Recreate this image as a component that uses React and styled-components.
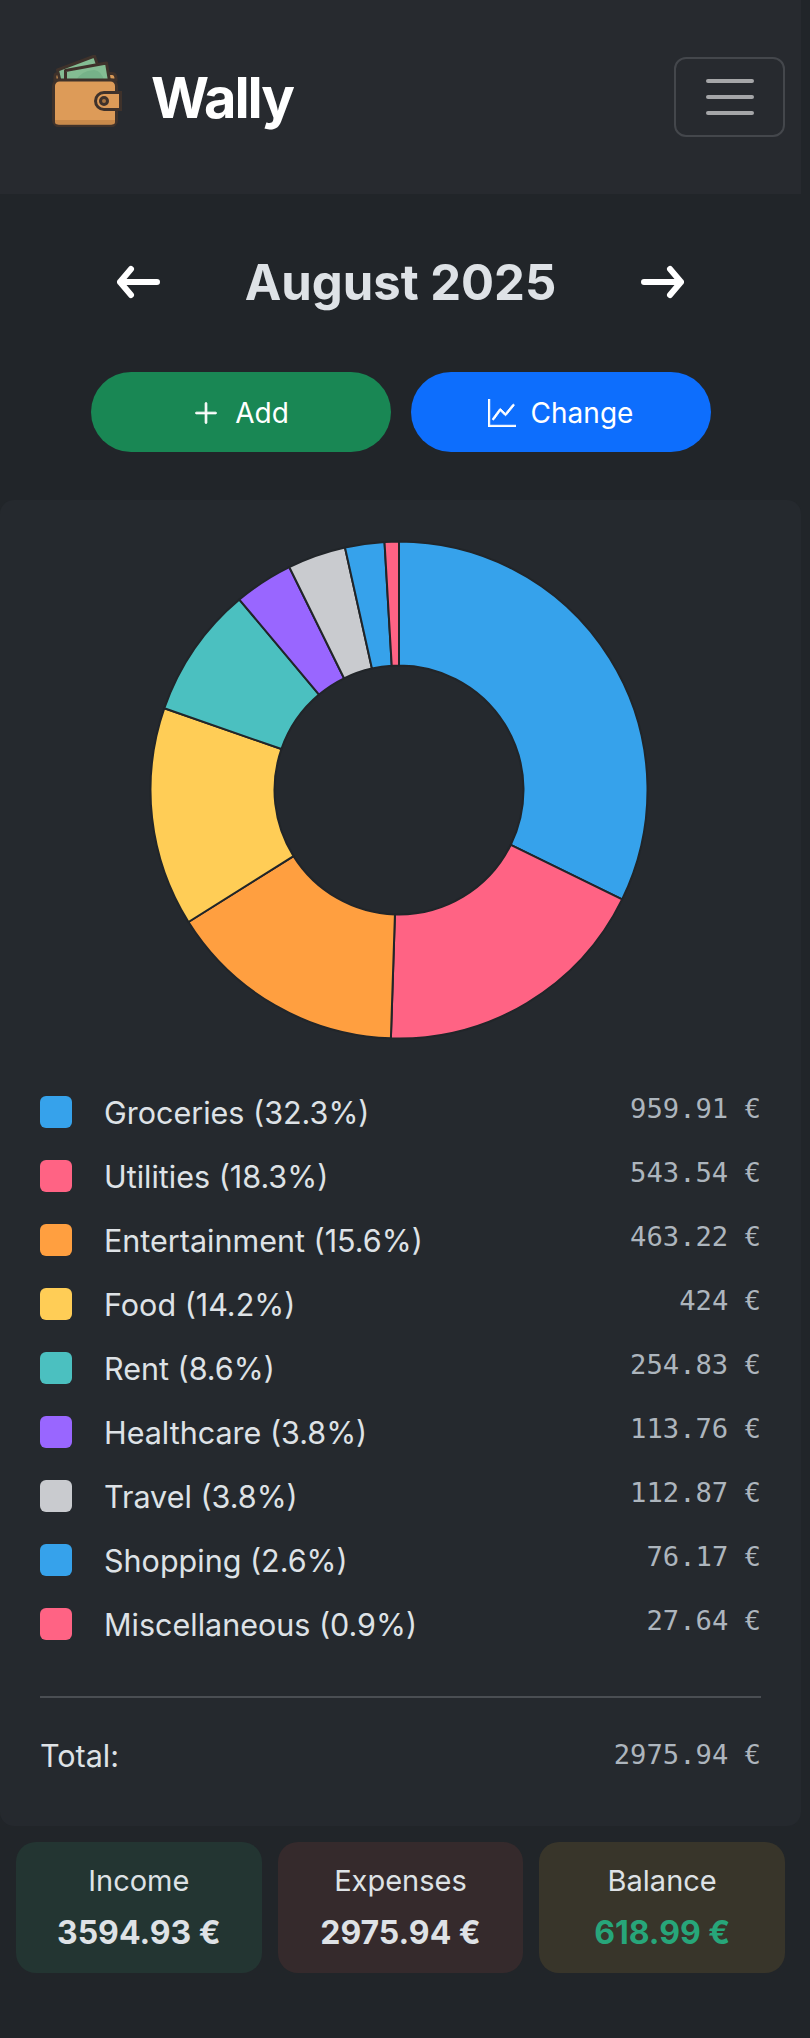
import React from "react"
import styled, { createGlobalStyle } from "styled-components"
import { BsPlusLg, BsGraphUp } from "react-icons/bs"

const GlobalStyle = createGlobalStyle`
  html, body {
    margin: 0;
    padding: 0;
    background: #212529;
    font-family: Inter, "Liberation Sans", sans-serif;
  }
`

const Page = styled.div`
  width: 801px;
  height: 2038px;
  overflow: hidden;
  background: #212529;
`

const Header = styled.header`
  height: 194px;
  box-sizing: border-box;
  padding: 0 16px 0 52px;
  display: flex;
  align-items: center;
  justify-content: space-between;
  background: #272a2f;
`

const Brand = styled.div`
  display: flex;
  align-items: center;
  gap: 29px;
`

const LogoSvg = styled.svg`
  flex: none;
  margin-bottom: 12px;
`

const BrandName = styled.h1`
  margin: 2px 0 0;
  font-size: 56px;
  font-weight: 700;
  letter-spacing: -2px;
  color: #fff;
`

const Toggler = styled.button`
  width: 111px;
  height: 80px;
  padding: 0;
  display: flex;
  flex-direction: column;
  align-items: center;
  justify-content: center;
  gap: 12px;
  background: transparent;
  border: 2px solid #44474c;
  border-radius: 12px;
`

const TogglerBar = styled.span`
  width: 48px;
  height: 4px;
  border-radius: 2px;
  background: #a5a6a8;
`

const MonthPanel = styled.section`
  height: 306px;
  box-sizing: border-box;
  padding-top: 60px;
`

const MonthRow = styled.div`
  display: flex;
  align-items: center;
  justify-content: space-between;
  padding: 0 116px;
  height: 56px;
`

const ArrowIcon = styled.svg`
  flex: none;
  fill: none;
  stroke: #fff;
  stroke-width: 6;
  stroke-linecap: round;
  stroke-linejoin: round;
`

const MonthTitle = styled.h2`
  margin: 0;
  font-size: 49px;
  font-weight: 700;
  color: #dee2e6;
`

const ButtonRow = styled.div`
  display: flex;
  justify-content: center;
  gap: 20px;
  margin-top: 62px;
`

const PillButton = styled.button`
  width: 300px;
  height: 80px;
  padding: 2px 0 0;
  display: flex;
  align-items: center;
  justify-content: center;
  gap: 15px;
  border: 0;
  border-radius: 40px;
  background: ${(props) => props.$bg};
  color: #fff;
  font-family: inherit;
  font-size: 28px;

  svg {
    stroke: currentColor;
    stroke-width: 0.5;
  }
`

const ChartCard = styled.section`
  height: 1326px;
  box-sizing: border-box;
  padding: 40px 40px 0;
  background: #25292e;
  border-radius: 14px;
`

const ChartWrap = styled.div`
  display: flex;
  justify-content: center;
  padding-right: 3px;
`

const Legend = styled.ul`
  list-style: none;
  margin: 40px 0 0;
  padding: 0;
`

const LegendRow = styled.li`
  height: 64px;
  display: flex;
  align-items: center;
`

const Swatch = styled.span`
  width: 32px;
  height: 32px;
  flex: none;
  margin-right: 32px;
  border-radius: 6px;
  background: ${(props) => props.$color};
`

const LegendLabel = styled.span`
  font-size: 30.5px;
  color: #dee2e6;
`

const Amount = styled.span`
  margin-left: auto;
  margin-top: -8px;
  font-family: "DejaVu Sans Mono", monospace;
  font-size: 27.2px;
  color: #adb5bd;
`

const TotalAmount = styled(Amount)`
  margin-top: -2px;
`

const Divider = styled.hr`
  margin: 40px 0 0;
  border: 0;
  height: 2px;
  background: #4a4e53;
`

const TotalRow = styled.div`
  height: 114px;
  display: flex;
  align-items: center;
`

const StatsRow = styled.div`
  display: grid;
  grid-template-columns: repeat(3, 1fr);
  gap: 16px;
  margin: 16px 16px 0;
`

const StatCard = styled.div`
  height: 131px;
  display: flex;
  flex-direction: column;
  align-items: center;
  justify-content: center;
  gap: 15px;
  border-radius: 20px;
  background: ${(props) => props.$bg};
`

const StatLabel = styled.span`
  font-size: 29px;
  color: #dee2e6;
`

const StatValue = styled.strong`
  font-size: 32px;
  font-weight: 700;
  color: ${(props) => props.$color || "#dee2e6"};
`

const categories = [
  { name: "Groceries", pct: "32.3", value: 959.91, amount: "959.91", color: "#36a2eb" },
  { name: "Utilities", pct: "18.3", value: 543.54, amount: "543.54", color: "#ff6384" },
  { name: "Entertainment", pct: "15.6", value: 463.22, amount: "463.22", color: "#ff9f40" },
  { name: "Food", pct: "14.2", value: 424, amount: "424", color: "#ffcd56" },
  { name: "Rent", pct: "8.6", value: 254.83, amount: "254.83", color: "#4bc0c0" },
  { name: "Healthcare", pct: "3.8", value: 113.76, amount: "113.76", color: "#9966ff" },
  { name: "Travel", pct: "3.8", value: 112.87, amount: "112.87", color: "#c9cbcf" },
  { name: "Shopping", pct: "2.6", value: 76.17, amount: "76.17", color: "#36a2eb" },
  { name: "Miscellaneous", pct: "0.9", value: 27.64, amount: "27.64", color: "#ff6384" },
]

const polar = (cx, cy, r, a) => [cx + r * Math.sin(a), cy - r * Math.cos(a)]

const Donut = () => {
  const total = categories.reduce((sum, c) => sum + c.value, 0)
  const c = 250
  const outer = 248.5
  const inner = 124.5
  let start = 0
  return (
    <svg width="500" height="500" viewBox="0 0 500 500">
      {categories.map((cat) => {
        const end = start + (cat.value / total) * Math.PI * 2
        const large = end - start > Math.PI ? 1 : 0
        const [x1, y1] = polar(c, c, outer, start)
        const [x2, y2] = polar(c, c, outer, end)
        const [x3, y3] = polar(c, c, inner, end)
        const [x4, y4] = polar(c, c, inner, start)
        const d = `M${x1} ${y1}A${outer} ${outer} 0 ${large} 1 ${x2} ${y2}L${x3} ${y3}A${inner} ${inner} 0 ${large} 0 ${x4} ${y4}Z`
        start = end
        return <path key={cat.name} d={d} fill={cat.color} stroke="#212529" strokeWidth="2" strokeLinejoin="round" />
      })}
    </svg>
  )
}

const WalletLogo = () => (
  <LogoSvg width="70" height="72" viewBox="0 0 70 72">
    <path d="M3 25V21Q3 18.500 6 18.500H60Q64 18.500 64 24V25Z" fill="#d99a58" stroke="#3f322b" strokeWidth="3" />
    <path d="M5.500 15L42.500 1L47 14L46 26H8Z" fill="#84bd93" stroke="#3f322b" strokeWidth="3" strokeLinejoin="round" />
    <path d="M13.500 26L13.500 15.500L54.500 8L57.500 26Z" fill="#84bd93" stroke="#3f322b" strokeWidth="3" strokeLinejoin="round" />
    <path d="M24 26Q28 16 42 15Q50 16 52 26Z" fill="#76b289" />
    <rect x="1.500" y="25" width="63" height="46" rx="6" fill="#dd9b58" stroke="#3f322b" strokeWidth="3" />
    <path d="M3 65H63V67Q63 69.500 60 69.500H6Q3 69.500 3 67Z" fill="#c98a4b" />
    <path d="M68.500 37.500H52A8.500 8.500 0 0 0 52 54.500H68.500Z" fill="#dd9b58" stroke="#3f322b" strokeWidth="3" />
    <circle cx="52" cy="46" r="3.500" fill="#a87440" stroke="#3f322b" strokeWidth="3" />
  </LogoSvg>
)

const ArrowLeft = () => (
  <ArrowIcon width="44" height="34" viewBox="0 0 44 34">
    <path d="M41 17H4M15 4L4 17L15 30" />
  </ArrowIcon>
)

const ArrowRight = () => (
  <ArrowIcon width="44" height="34" viewBox="0 0 44 34">
    <path d="M3 17H40M29 4L40 17L29 30" />
  </ArrowIcon>
)

const App = () => (
  <Page>
    <GlobalStyle />
    <Header>
      <Brand>
        <WalletLogo />
        <BrandName>Wally</BrandName>
      </Brand>
      <Toggler aria-label="Menu">
        <TogglerBar />
        <TogglerBar />
        <TogglerBar />
      </Toggler>
    </Header>
    <MonthPanel>
      <MonthRow>
        <ArrowLeft />
        <MonthTitle>August 2025</MonthTitle>
        <ArrowRight />
      </MonthRow>
      <ButtonRow>
        <PillButton $bg="#198754"><BsPlusLg size={28} />Add</PillButton>
        <PillButton $bg="#0d6efd"><BsGraphUp size={28} />Change</PillButton>
      </ButtonRow>
    </MonthPanel>
    <ChartCard>
      <ChartWrap><Donut /></ChartWrap>
      <Legend>
        {categories.map((cat) => (
          <LegendRow key={cat.name}>
            <Swatch $color={cat.color} />
            <LegendLabel>{cat.name} ({cat.pct}%)</LegendLabel>
            <Amount>{cat.amount} €</Amount>
          </LegendRow>
        ))}
      </Legend>
      <Divider />
      <TotalRow>
        <LegendLabel>Total:</LegendLabel>
        <TotalAmount>2975.94 €</TotalAmount>
      </TotalRow>
    </ChartCard>
    <StatsRow>
      <StatCard $bg="#233532">
        <StatLabel>Income</StatLabel>
        <StatValue>3594.93 €</StatValue>
      </StatCard>
      <StatCard $bg="#352a2c">
        <StatLabel>Expenses</StatLabel>
        <StatValue>2975.94 €</StatValue>
      </StatCard>
      <StatCard $bg="#38352a">
        <StatLabel>Balance</StatLabel>
        <StatValue $color="#27a67a">618.99 €</StatValue>
      </StatCard>
    </StatsRow>
  </Page>
)

export default App
